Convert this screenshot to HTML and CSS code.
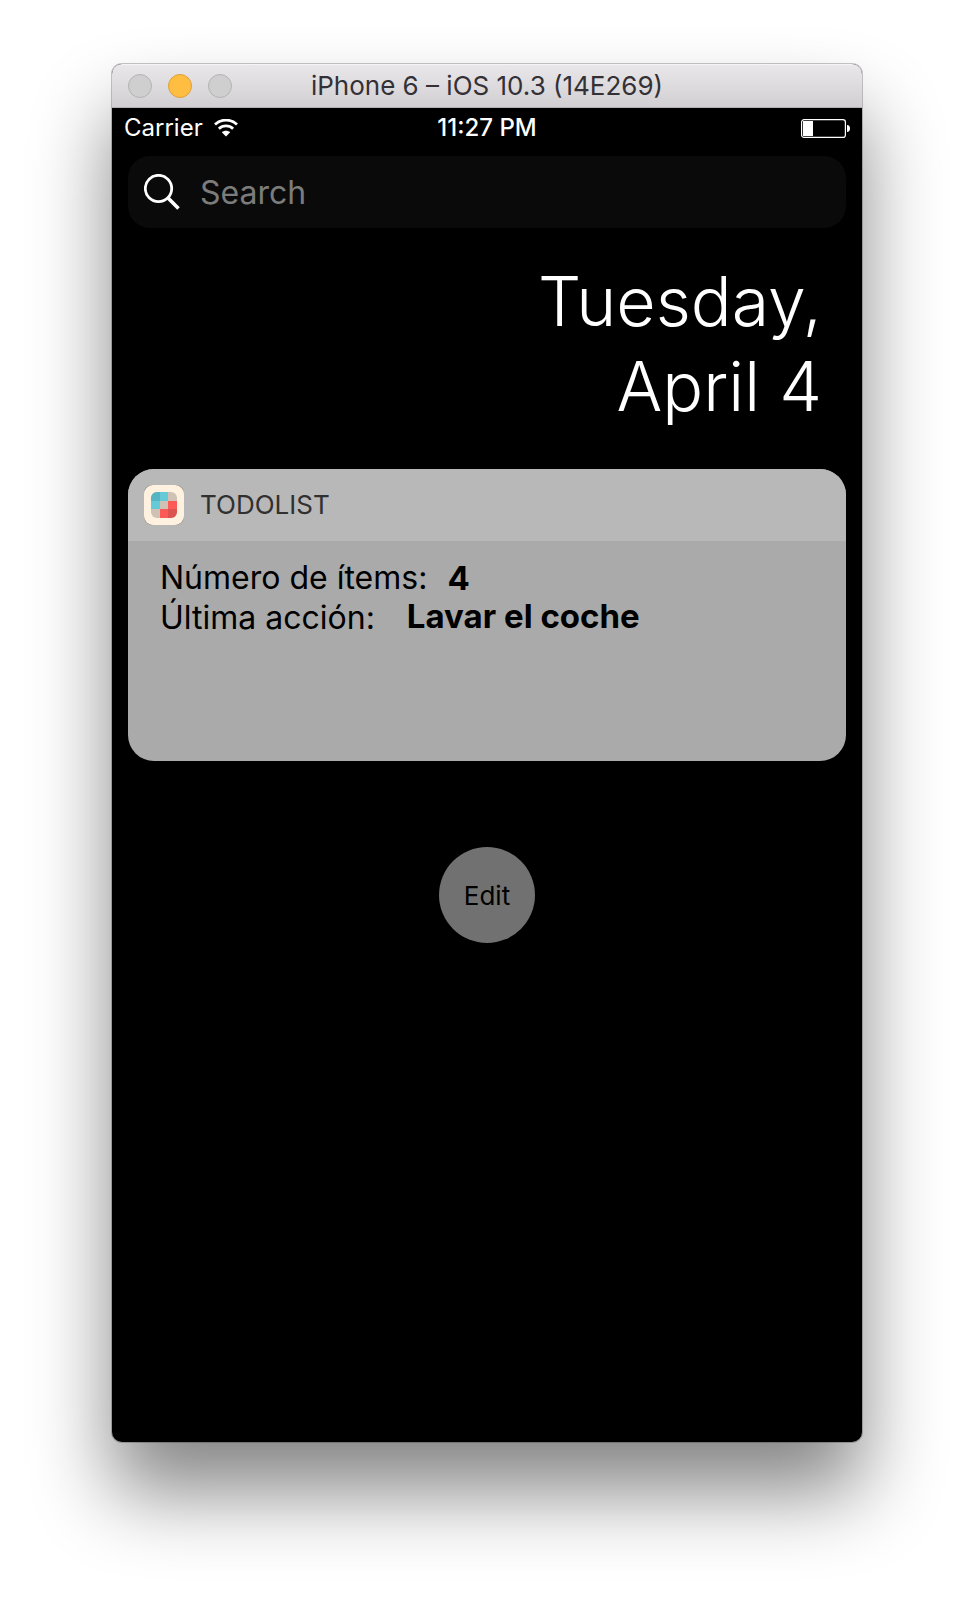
FILE: index.html
```html
<!DOCTYPE html>
<html lang="es">
<head>
<meta charset="utf-8">
<meta name="viewport" content="width=device-width, initial-scale=1">
<title>iPhone 6 – iOS 10.3 (14E269)</title>
<link rel="stylesheet" href="styles.css">
</head>
<body>
<main class="window">
  <header class="titlebar">
    <div class="lights">
      <button class="light" type="button" aria-label="Close"></button>
      <button class="light light-minimize" type="button" aria-label="Minimize"></button>
      <button class="light" type="button" aria-label="Zoom"></button>
    </div>
    <h1 class="title">iPhone 6 – iOS 10.3 (14E269)</h1>
  </header>

  <div class="statusbar">
    <div class="carrier">
      <span>Carrier</span>
      <svg class="wifi" viewBox="0 0 24 18" aria-hidden="true">
        <path d="M1 5.6C7.200-.4 16.800-.4 23 5.600" fill="none" stroke="#fff" stroke-width="2.800"/>
        <path d="M4.900 9.700C8.900 5.900 15.100 5.900 19.100 9.700" fill="none" stroke="#fff" stroke-width="2.800"/>
        <path d="M12 17.500L7.800 13.300C10.200 11.300 13.800 11.300 16.200 13.300Z" fill="#fff"/>
      </svg>
    </div>
    <time class="clock">11:27 PM</time>
    <svg class="battery" viewBox="0 0 49 19" aria-hidden="true">
      <rect x=".6" y=".6" width="43.800" height="17.800" rx="2.500" fill="none" stroke="#fff" stroke-width="1.200"/>
      <rect x="2" y="2" width="10" height="15" fill="#fff"/>
      <path d="M46 6C48 6 49 7.500 49 9.500S48 13 46 13Z" fill="#fff"/>
    </svg>
  </div>

  <div class="screen">
    <label class="search">
      <svg class="search-icon" viewBox="0 0 36 36" aria-hidden="true">
        <circle cx="14.500" cy="14.500" r="13.200" fill="none" stroke="#fff" stroke-width="2.800"/>
        <path d="M23.800 23.800L34.500 34.500" stroke="#fff" stroke-width="3.600"/>
      </svg>
      <input class="search-input" type="search" placeholder="Search" aria-label="Search">
    </label>

    <p class="date">Tuesday,<br>April 4</p>

    <section class="widget">
      <header class="widget-header">
        <svg class="app-icon" viewBox="0 0 40 40" aria-hidden="true">
          <defs><clipPath id="tile"><rect x="7" y="7" width="26" height="26" rx="6"/></clipPath></defs>
          <rect width="40" height="40" rx="8" fill="#8d8880"/>
          <rect width="40" height="40" rx="9" fill="#fff1df"/>
          <g clip-path="url(#tile)">
            <rect x="7" y="7" width="26" height="26" fill="#cfc2b4"/>
            <path d="M7 7h9v9H7z" fill="#55b5c2"/>
            <path d="M16 7h8v9h-8zM7 16h9v8H7z" fill="#66c9d8"/>
            <path d="M24 16h9v8h-9zM16 24h8v9h-8z" fill="#fb5a57"/>
            <path d="M24 24h9v9h-9z" fill="#dc5450"/>
          </g>
        </svg>
        <h2 class="widget-title">TODOLIST</h2>
      </header>
      <dl class="widget-body">
        <div class="row"><dt>Número de ítems:</dt><dd>4</dd></div>
        <div class="row row-last"><dt>Última acción:</dt><dd>Lavar el coche</dd></div>
      </dl>
    </section>

    <button class="edit" type="button">Edit</button>
  </div>
</main>
</body>
</html>
```

FILE: styles.css
```css
* {
  box-sizing: border-box;
}

body {
  margin: 0;
  min-height: 100vh;
  padding: 64px 112px 160px;
  display: flex;
  background: #fff;
  font-family: Inter, "Liberation Sans", sans-serif;
}

h1, h2, p, dl, dd {
  margin: 0;
  font-weight: 400;
}

button {
  padding: 0;
  border: 0;
  font: inherit;
}

.window {
  flex: 1;
  min-width: 0;
  display: flex;
  flex-direction: column;
  border-radius: 10px;
  background: #000;
  box-shadow: 0 0 0 1px rgba(0, 0, 0, 0.22), 0 50px 80px rgba(0, 0, 0, 0.48);
}

.titlebar {
  display: grid;
  grid-template-columns: 1fr auto 1fr;
  align-items: center;
  height: 44px;
  padding: 0 16px;
  border-top: 1px solid #f6f5f6;
  border-bottom: 1px solid #b1afb1;
  border-radius: 10px 10px 0 0;
  background: linear-gradient(#e9e7e9, #d2cfd2);
}

.lights {
  display: flex;
  gap: 16px;
}

.light {
  width: 24px;
  height: 24px;
  border: 1px solid #b4b3b4;
  border-radius: 50%;
  background: #cfcfcf;
}

.light-minimize {
  border-color: #de9f37;
  background: #ffbe41;
}

.title {
  font-size: 26px;
  line-height: 32px;
  color: #333135;
}

.statusbar {
  display: grid;
  grid-template-columns: 1fr auto 1fr;
  align-items: center;
  height: 40px;
  padding: 0 12px;
  font-size: 24px;
  line-height: 32px;
  color: #fff;
}

.carrier {
  display: flex;
  align-items: center;
  gap: 11px;
}

.wifi {
  width: 24px;
  height: 18px;
}

.clock {
  font-weight: 500;
}

.battery {
  width: 49px;
  height: 19px;
  justify-self: end;
}

.screen {
  display: flex;
  flex-direction: column;
  padding: 8px 16px;
}

.search {
  display: flex;
  align-items: center;
  gap: 20px;
  height: 72px;
  padding: 0 16px;
  border-radius: 22px;
  background: #0a0a0a;
}

.search-icon {
  flex: none;
  width: 36px;
  height: 36px;
}

.search-input {
  flex: 1;
  min-width: 0;
  padding: 0;
  border: 0;
  outline: 0;
  background: none;
  font: inherit;
  font-size: 32px;
  color: #fff;
}

.search-input::placeholder {
  color: #7c7c7c;
  opacity: 1;
}

.date {
  padding: 31px 24px 40px 0;
  font-size: 68px;
  font-weight: 300;
  line-height: 85px;
  text-align: right;
  color: #fff;
}

.widget {
  overflow: hidden;
  border-radius: 26px;
  background: #aaa;
  color: #000;
}

.widget-header {
  display: flex;
  align-items: center;
  gap: 16px;
  height: 72px;
  padding: 0 16px;
  background: #b8b8b8;
}

.app-icon {
  width: 40px;
  height: 40px;
}

.widget-title {
  font-size: 26px;
  line-height: 32px;
  color: #303030;
}

.widget-body {
  min-height: 220px;
  padding: 17px 32px;
  font-size: 32px;
  line-height: 40px;
}

.row {
  display: flex;
  gap: 20px;
}

.row-last {
  gap: 32px;
}

.row dd {
  font-size: 33px;
  font-weight: 700;
}

.row-last dd {
  line-height: 36px;
}

.edit {
  align-self: center;
  width: 96px;
  height: 96px;
  margin-top: 86px;
  border-radius: 50%;
  background: #717171;
  font-size: 26px;
  color: #000;
}
```
